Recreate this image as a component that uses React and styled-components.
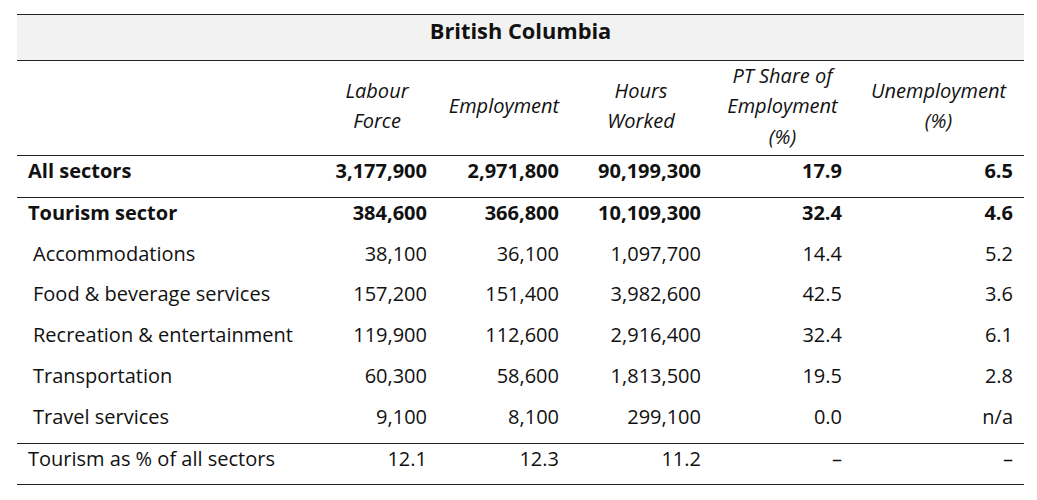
import styled, { createGlobalStyle } from "styled-components"

const Global = createGlobalStyle`
  body {
    margin: 0;
    background: #fff;
    font-family: "Open Sans", "Noto Sans", sans-serif;
    color: #111;
  }
`

const Page = styled.div`
  padding: 14px 0 0 17px;
`

const Table = styled.table`
  width: 1007px;
  border-collapse: collapse;
  table-layout: fixed;
  font-size: 20px;
  line-height: 29px;
  border-top: 1px solid #222;
`

const TitleCell = styled.th`
  background: #f2f2f2;
  font-size: 21.8px;
  line-height: 31.5px;
  font-weight: 700;
  text-align: center;
  padding: 0 0 13px;
  border-bottom: 1px solid #222;
`

const HeadCell = styled.th`
  font-style: italic;
  font-weight: 400;
  line-height: 30.5px;
  text-align: center;
  vertical-align: middle;
  padding: 0 8px 3px;
  border-bottom: 1px solid #222;
`

const Row = styled.tr`
  border-bottom: ${(p) => (p.$line ? "1px solid #222" : "none")};
`

const Label = styled.td`
  padding: 0 11px 11.8px ${(p) => (p.$sub ? "16px" : "11px")};
  font-weight: ${(p) => (p.$bold ? 700 : 400)};
  vertical-align: top;
  white-space: nowrap;
`

const Num = styled.td`
  padding: 0 11px 11.8px;
  text-align: right;
  font-weight: ${(p) => (p.$bold ? 700 : 400)};
  vertical-align: top;
  white-space: nowrap;
`

const rows = [
  { label: "All sectors", bold: true, line: true, v: ["3,177,900", "2,971,800", "90,199,300", "17.9", "6.5"] },
  { label: "Tourism sector", bold: true, v: ["384,600", "366,800", "10,109,300", "32.4", "4.6"] },
  { label: "Accommodations", sub: true, v: ["38,100", "36,100", "1,097,700", "14.4", "5.2"] },
  { label: "Food & beverage services", sub: true, v: ["157,200", "151,400", "3,982,600", "42.5", "3.6"] },
  { label: "Recreation & entertainment", sub: true, v: ["119,900", "112,600", "2,916,400", "32.4", "6.1"] },
  { label: "Transportation", sub: true, v: ["60,300", "58,600", "1,813,500", "19.5", "2.8"] },
  { label: "Travel services", sub: true, line: true, v: ["9,100", "8,100", "299,100", "0.0", "n/a"] },
  { label: "Tourism as % of all sectors", line: true, v: ["12.1", "12.3", "11.2", "–", "–"] },
]

const App = () => {
  return (
    <Page>
      <Global />
      <Table>
        <colgroup>
          <col style={{ width: 299 }} />
          <col style={{ width: 122 }} />
          <col style={{ width: 132 }} />
          <col style={{ width: 142 }} />
          <col style={{ width: 141 }} />
          <col style={{ width: 171 }} />
        </colgroup>
        <thead>
          <tr>
            <TitleCell colSpan={6}>British Columbia</TitleCell>
          </tr>
          <tr>
            <HeadCell />
            <HeadCell>Labour<br />Force</HeadCell>
            <HeadCell>Employment</HeadCell>
            <HeadCell>Hours<br />Worked</HeadCell>
            <HeadCell>PT Share of<br />Employment<br />(%)</HeadCell>
            <HeadCell>Unemployment<br />(%)</HeadCell>
          </tr>
        </thead>
        <tbody>
          {rows.map((r) => (
            <Row key={r.label} $line={r.line}>
              <Label $bold={r.bold} $sub={r.sub}>{r.label}</Label>
              {r.v.map((x, i) => (
                <Num key={i} $bold={r.bold}>{x}</Num>
              ))}
            </Row>
          ))}
        </tbody>
      </Table>
    </Page>
  )
}

export default App
